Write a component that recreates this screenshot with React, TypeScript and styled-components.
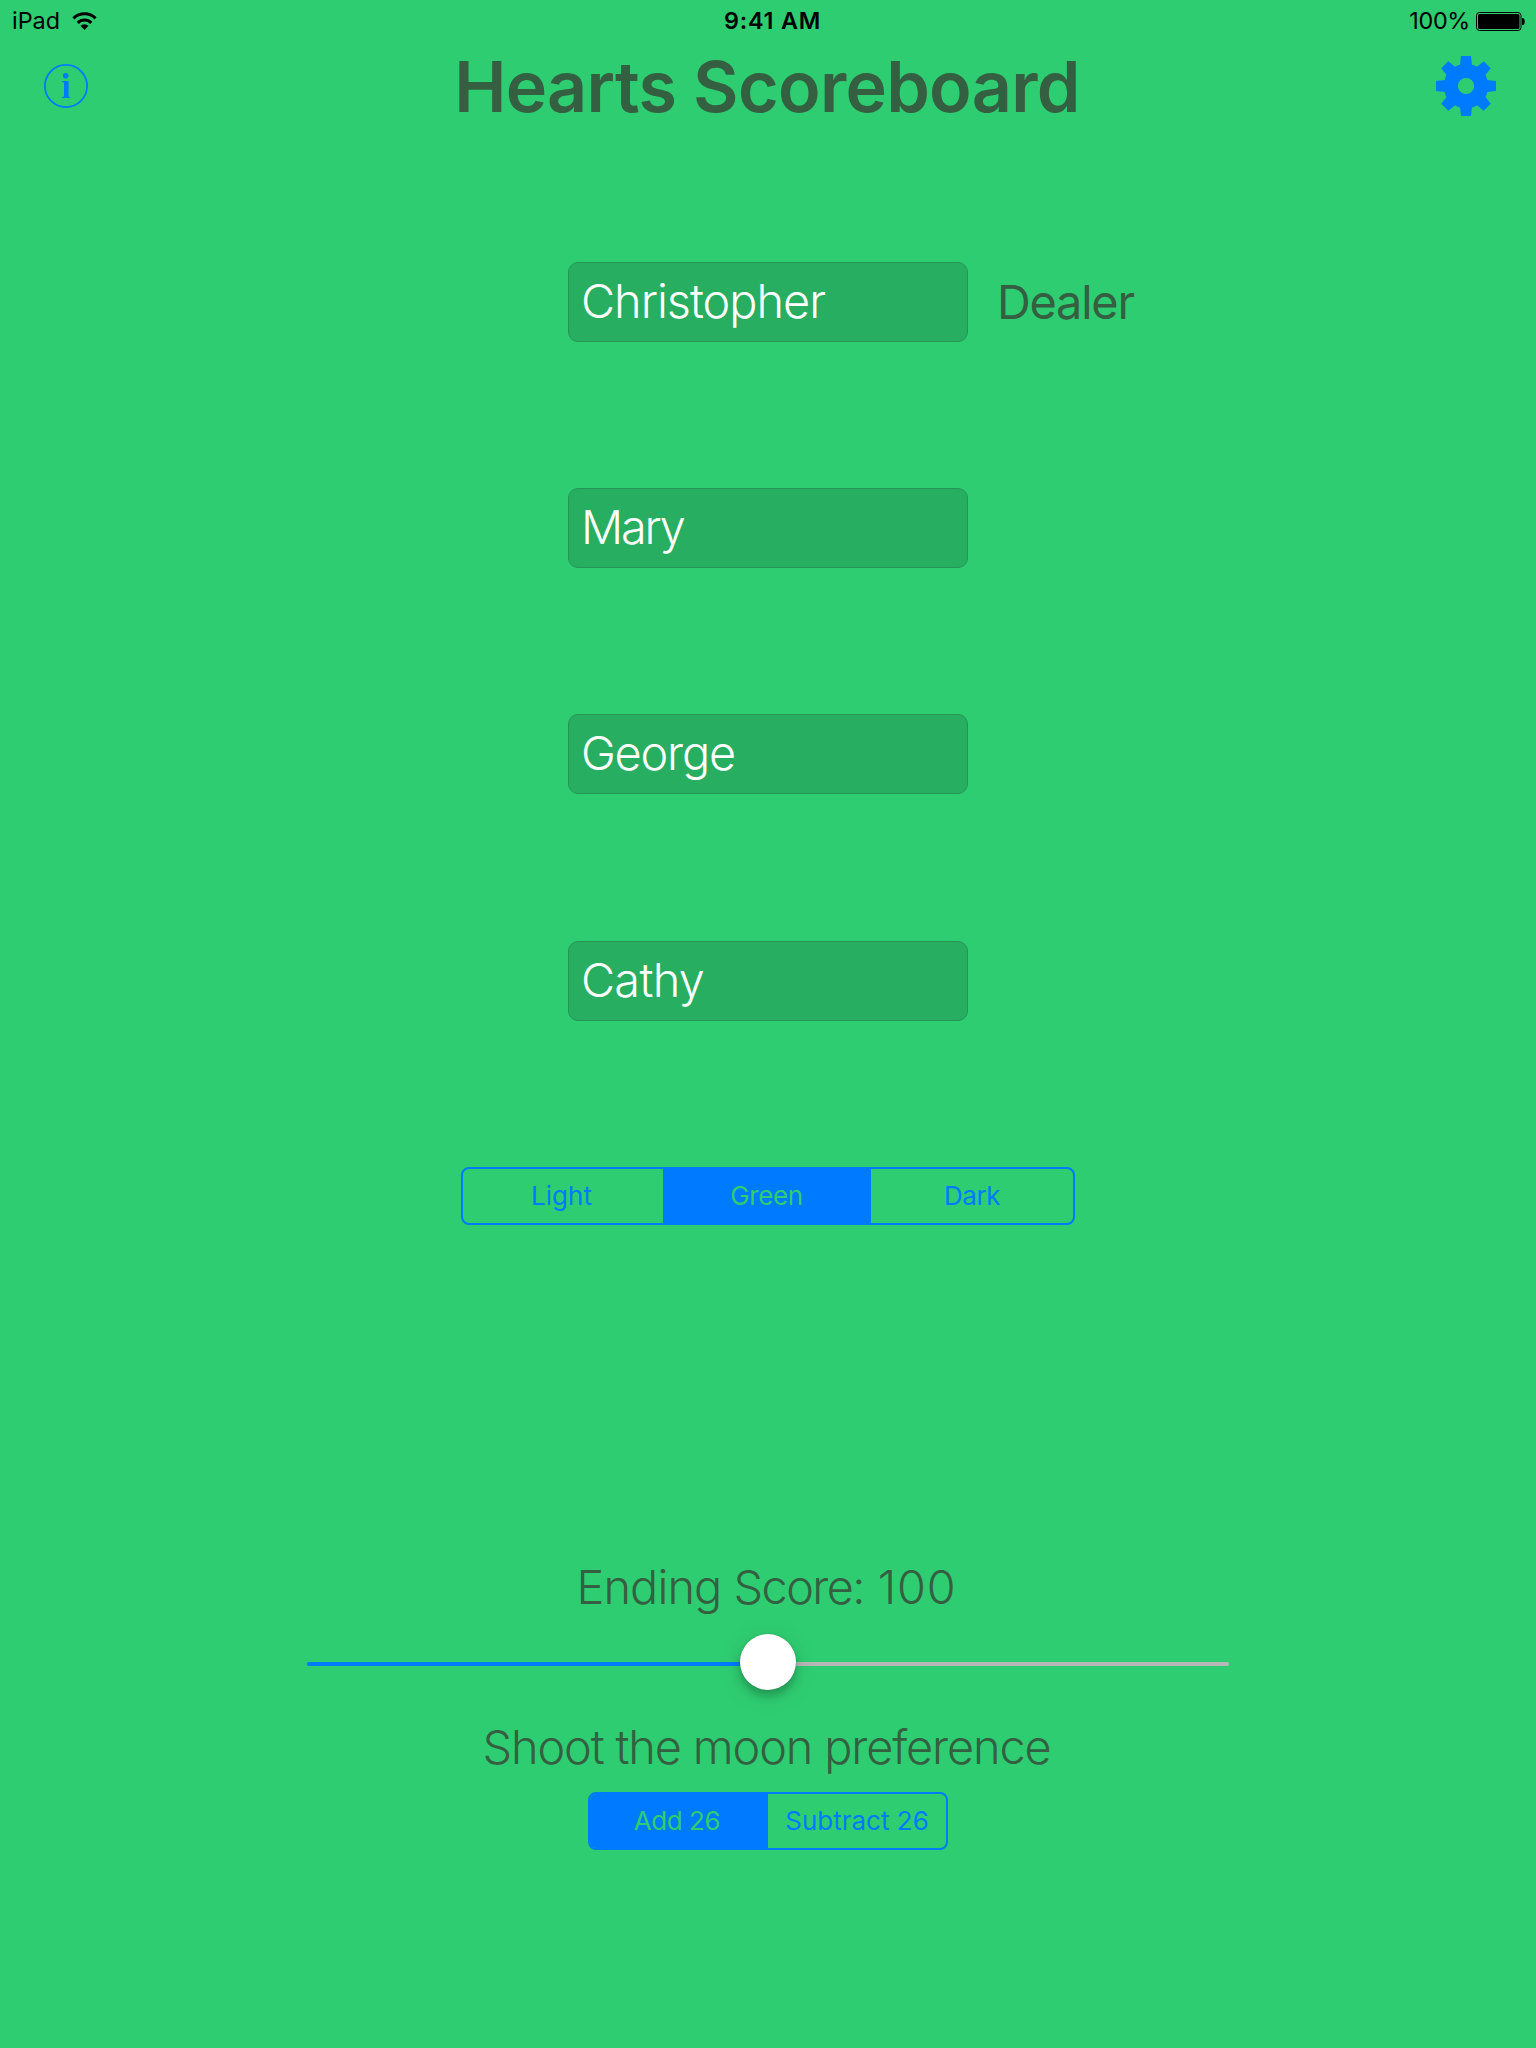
import React, { useState } from 'react';
import styled, { createGlobalStyle } from 'styled-components';

const green = '#2fcd71';
const blue = '#007aff';
const ink = '#345f41';

const GlobalStyle = createGlobalStyle`
  *, *::before, *::after { box-sizing: border-box; }
  body {
    margin: 0;
    background: ${green};
    font-family: Inter, "Liberation Sans", sans-serif;
  }
`;

const Screen = styled.main`
  width: 1536px;
  height: 2048px;
  display: flex;
  flex-direction: column;
  align-items: center;
  overflow: hidden;
  background: ${green};
  color: ${ink};
`;

const StatusBar = styled.div`
  width: 100%;
  height: 40px;
  display: grid;
  grid-template-columns: 1fr auto 1fr;
  align-items: center;
  padding: 1px 11px 0 12px;
  color: #000;
  font-size: 23.4px;
  line-height: 40px;
  flex: none;
`;

const StatusGroup = styled.div<{ $end?: boolean }>`
  display: flex;
  align-items: center;
  justify-content: ${p => (p.$end ? 'flex-end' : 'flex-start')};
  gap: ${p => (p.$end ? 6 : 12)}px;
  svg { margin-top: ${p => (p.$end ? 0 : -1)}px; }
`;

const StatusText = styled.span<{ $tracking?: number }>`
  letter-spacing: ${p => p.$tracking ?? 0}px;
`;

const Clock = styled.span`
  padding-left: 8px;
  font-weight: 600;
  letter-spacing: 0.8px;
`;

const Header = styled.header`
  width: 100%;
  height: 92px;
  display: flex;
  align-items: center;
  justify-content: space-between;
  padding: 0 40px 0 44px;
  flex: none;
`;

const IconButton = styled.button<{ $size: number }>`
  width: ${p => p.$size}px;
  height: ${p => p.$size}px;
  padding: 0;
  border: 0;
  background: none;
  color: ${blue};
  svg { display: block; }
`;

const Title = styled.h1`
  margin: 0;
  padding: 1px 0 0 10px;
  font-size: 70px;
  line-height: 92px;
  font-weight: 600;
  letter-spacing: -0.7px;
`;

const Players = styled.section`
  width: 100%;
  display: flex;
  flex-direction: column;
  gap: 146px;
  margin-top: 130px;
  flex: none;
`;

const PlayerRow = styled.div`
  display: grid;
  grid-template-columns: 1fr 400px 1fr;
  align-items: center;
  height: 80px;
  &:last-child { margin-top: 1px; }
`;

const NameField = styled.div<{ $tracking: number }>`
  grid-column: 2;
  height: 80px;
  padding: 0 0 0 12px;
  border: 1px solid #239656;
  border-radius: 10px;
  background: #27ae60;
  color: #fff;
  font-size: 46.8px;
  line-height: 76px;
  font-weight: 300;
  letter-spacing: ${p => p.$tracking}px;
`;

const Dealer = styled.span`
  padding-left: 29px;
  font-size: 46.8px;
  line-height: 80px;
  letter-spacing: -1.2px;
`;

const Segments = styled.div<{ $columns: string; $top: number }>`
  display: grid;
  grid-template-columns: ${p => p.$columns};
  height: 58px;
  margin-top: ${p => p.$top}px;
  border: 2px solid ${blue};
  border-radius: 8px;
  overflow: hidden;
  flex: none;
`;

const Segment = styled.button<{ $active: boolean; $tracking: number; $trim: number }>`
  border: 0;
  padding: 0 ${p => p.$trim}px 0 0;
  text-align: center;
  font: 400 26px/54px Inter, "Liberation Sans", sans-serif;
  letter-spacing: ${p => p.$tracking}px;
  background: ${p => (p.$active ? blue : 'transparent')};
  color: ${p => (p.$active ? green : blue)};
`;

const Label = styled.div<{ $top: number; $tracking: number }>`
  margin-top: ${p => p.$top}px;
  padding-right: 3px;
  height: 58px;
  font-size: 46.8px;
  line-height: 58px;
  font-weight: 300;
  letter-spacing: ${p => p.$tracking}px;
  white-space: pre;
  flex: none;
`;

const Tracked = styled.span<{ $tracking: number }>`
  letter-spacing: ${p => p.$tracking}px;
`;

const Slider = styled.div`
  width: 922px;
  height: 56px;
  margin-top: 18px;
  display: flex;
  align-items: center;
  flex: none;
`;

const Track = styled.div<{ $filled?: boolean }>`
  flex: 1;
  height: 4px;
  margin-top: 4px;
  border-radius: ${p => (p.$filled ? '2px 0 0 2px' : '0 2px 2px 0')};
  background: ${p => (p.$filled ? blue : '#b7b7b7')};
`;

const Knob = styled.div`
  width: 56px;
  height: 56px;
  border-radius: 50%;
  background: #fff;
  box-shadow: 0 0 1px rgba(0, 0, 0, 0.3), 0 6px 8px rgba(0, 0, 0, 0.22), 0 4px 26px rgba(0, 0, 0, 0.1);
  z-index: 1;
`;

const WifiIcon = () => (
  <svg width="25" height="20" viewBox="72 10 25 20" fill="none" stroke="#000" strokeWidth="3">
    <path d="M73.4 17.3A16 16 0 0 1 95.6 17.3" />
    <path d="M77.7 21.8A9.8 9.8 0 0 1 91.3 21.8" />
    <path d="M84.5 29L80.5 24.8A5.8 5.8 0 0 1 88.5 24.8Z" fill="#000" stroke="none" />
  </svg>
);

const BatteryIcon = () => (
  <svg width="49" height="19" viewBox="0 0 49 19">
    <rect x="0.5" y="0.5" width="44.5" height="18" rx="3" fill="none" stroke="#000" />
    <rect x="2" y="2" width="41.5" height="15" rx="1.5" />
    <path d="M46 6h1.2q1.6 1 1.6 3.5t-1.6 3.5H46z" />
  </svg>
);

const InfoIcon = () => (
  <svg width="44" height="44" viewBox="0 0 44 44" fill="currentColor">
    <circle cx="22" cy="22" r="21.1" fill="none" stroke="currentColor" strokeWidth="1.8" />
    <circle cx="21.7" cy="11.7" r="2.8" />
    <path d="M18 17H24.6V32.6L26 33V34H18V33L20 32.6V18.4L18 18Z" />
  </svg>
);

const GearIcon = () => (
  <svg width="60" height="60" viewBox="-30 -30 60 60" fill="currentColor">
    <circle r="15.2" fill="none" stroke="currentColor" strokeWidth="14.2" />
    {[0, 45, 90, 135, 180, 225, 270, 315].map(angle => (
      <path key={angle} transform={`rotate(${angle})`} d="M-5 -30H5L6 -21L7.5 -18H-7.5L-6 -21Z" />
    ))}
  </svg>
);

interface Option { label: string; tracking: number; trim: number }

function SegmentedControl({ options, initial, columns, top }: {
  options: Option[]; initial: number; columns: string; top: number;
}) {
  const [selected, setSelected] = useState(initial);
  return (
    <Segments $columns={columns} $top={top}>
      {options.map((option, index) => (
        <Segment
          key={option.label}
          $active={index === selected}
          $tracking={option.tracking}
          $trim={option.trim}
          onClick={() => setSelected(index)}
        >
          {option.label}
        </Segment>
      ))}
    </Segments>
  );
}

const players = [
  { name: 'Christopher', tracking: -1, dealer: true },
  { name: 'Mary', tracking: -2.2, dealer: false },
  { name: 'George', tracking: -1.2, dealer: false },
  { name: 'Cathy', tracking: -0.7, dealer: false },
];

export default function App() {
  return (
    <>
      <GlobalStyle />
      <Screen>
        <StatusBar>
          <StatusGroup>
            <StatusText>iPad</StatusText>
            <WifiIcon />
          </StatusGroup>
          <Clock>9:41 AM</Clock>
          <StatusGroup $end>
            <StatusText $tracking={-0.34}>100%</StatusText>
            <BatteryIcon />
          </StatusGroup>
        </StatusBar>
        <Header>
          <IconButton $size={44} aria-label="Info"><InfoIcon /></IconButton>
          <Title>Hearts Scoreboard</Title>
          <IconButton $size={60} aria-label="Settings"><GearIcon /></IconButton>
        </Header>
        <Players>
          {players.map(player => (
            <PlayerRow key={player.name}>
              <NameField $tracking={player.tracking}>{player.name}</NameField>
              {player.dealer && <Dealer>Dealer</Dealer>}
            </PlayerRow>
          ))}
        </Players>
        <SegmentedControl
          top={146}
          columns="200px 208px 202px"
          initial={1}
          options={[
            { label: 'Light', tracking: 0, trim: 3 },
            { label: 'Green', tracking: -0.35, trim: 1 },
            { label: 'Dark', tracking: -0.5, trim: 0 },
          ]}
        />
        <Label $top={333} $tracking={-0.9}>
          {'Ending '}
          <Tracked $tracking={-1.6}>Score:</Tracked>
          <Tracked $tracking={0.8}>{' 100'}</Tracked>
        </Label>
        <Slider>
          <Track $filled />
          <Knob />
          <Track />
        </Slider>
        <Label $top={28} $tracking={-1.12}>Shoot the moon preference</Label>
        <SegmentedControl
          top={16}
          columns="178px 178px"
          initial={0}
          options={[
            { label: 'Add 26', tracking: -0.45, trim: 4 },
            { label: 'Subtract 26', tracking: 0, trim: 0 },
          ]}
        />
      </Screen>
    </>
  );
}
